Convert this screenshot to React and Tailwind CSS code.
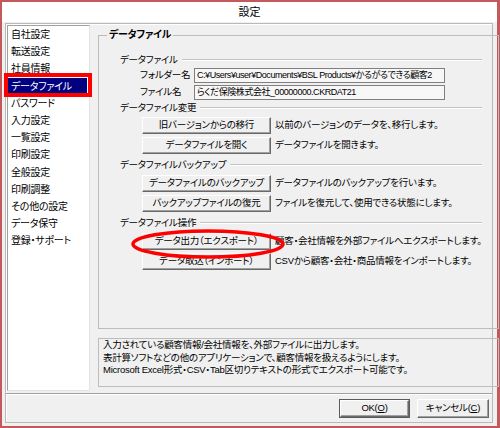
import React from "react";

const items = [
  "自社設定",
  "転送設定",
  "社員情報",
  "データファイル",
  "パスワード",
  "入力設定",
  "一覧設定",
  "印刷設定",
  "全般設定",
  "印刷調整",
  "その他の設定",
  "データ保守",
  "登録・サポート",
];

function Header({ children, className = "" }) {
  return (
    <div className={"h-[14px] flex items-center gap-[4px] " + className}>
      <span className="whitespace-nowrap">{children}</span>
      <div className="flex-1 h-[2px] border-t border-[#c3c3c3] border-b border-b-white" />
    </div>
  );
}

function Btn({ children, w = "w-[129px]", h = "h-[17px]", extra = "" }) {
  return (
    <div
      className={
        w +
        " " +
        h +
        " shrink-0 flex items-center justify-center bg-[#f0f0f0] border border-t-white border-l-white border-b-[#696969] border-r-[#696969] shadow-[inset_-1px_-1px_0_#a0a0a0] whitespace-nowrap " +
        extra
      }
    >
      {children}
    </div>
  );
}

function BtnRow({ label, desc, className = "" }) {
  return (
    <div className={"flex items-center ml-[22px] " + className}>
      <Btn>{label}</Btn>
      <span className="ml-[4px] whitespace-nowrap">{desc}</span>
    </div>
  );
}

function Field({ label, value, className = "" }) {
  return (
    <div className={"flex items-center ml-[20px] " + className}>
      <span className="w-[54px] whitespace-nowrap">{label}</span>
      <div className="w-[251px] h-[15px] border border-[#7f7f7f] bg-[#f7f7f7] pl-[2px] leading-[13px] whitespace-nowrap overflow-hidden text-[9px] tracking-[-0.45px]">
        {value}
      </div>
    </div>
  );
}

export default function App() {
  return (
    <div className="relative w-[500px] h-[428px] flex flex-col bg-[#f0f0f0] border-2 border-r-[3px] border-[#c4585b] text-[9.5px] tracking-[-0.25px] text-black font-['Liberation_Sans','Noto_Sans_CJK_JP',sans-serif] [font-feature-settings:'palt']">
      <div className="h-[20px] shrink-0 bg-white flex items-center justify-center text-[11px] tracking-normal">
        設定
      </div>
      <div className="flex-1 pl-[3px] pr-[4px] pt-[1px]">
        <div className="h-[400px] border border-[#b9b9b9] shadow-[inset_1px_1px_0_#fff] flex flex-col">
          <div className="h-[369px] flex shrink-0">
            {/* left list */}
            <div className="ml-[1px] mt-[1px] w-[83px] h-[366px] shrink-0 bg-white border border-[#a0a0a0] border-r-[#e3e3e3] border-b-[#e3e3e3] flex flex-col">
              {items.map((t, i) => (
                <div
                  key={t}
                  className={
                    "h-[17.2px] shrink-0 flex items-center pl-[3px] mr-[2px] whitespace-nowrap text-[10px] " +
                    (i === 3 ? "bg-[#000080] text-white" : "")
                  }
                >
                  {t}
                </div>
              ))}
            </div>
            {/* right area */}
            <div className="flex-1 pl-[8px] pr-[8px] flex flex-col">
              <fieldset className="mt-[4px] h-[301px] border border-[#bcbcbc]">
                <legend className="ml-[8px] px-[2px] font-bold leading-[14px] text-[10px]">
                  データファイル
                </legend>
                <div className="pl-[21px] pr-[16px] pt-[11px]">
                  <Header>データファイル</Header>
                  <Field
                    className="mt-[1px]"
                    label="フォルダー名"
                    value="C:¥Users¥user¥Documents¥BSL Products¥かるがるできる顧客2"
                  />
                  <Field
                    className="mt-[2px]"
                    label="ファイル名"
                    value="らくだ保険株式会社_00000000.CKRDAT21"
                  />
                  <Header className="mt-[1px]">データファイル変更</Header>
                  <BtnRow
                    className="mt-[2px]"
                    label="旧バージョンからの移行"
                    desc="以前のバージョンのデータを、移行します。"
                  />
                  <BtnRow
                    className="mt-[3px]"
                    label="データファイルを開く"
                    desc="データファイルを開きます。"
                  />
                  <Header className="mt-[4px]">データファイルバックアップ</Header>
                  <BtnRow
                    className="mt-[3px]"
                    label="データファイルのバックアップ"
                    desc="データファイルのバックアップを行います。"
                  />
                  <BtnRow
                    className="mt-[3px]"
                    label="バックアップファイルの復元"
                    desc="ファイルを復元して、使用できる状態にします。"
                  />
                  <Header className="mt-[4px]">データファイル操作</Header>
                  <BtnRow
                    className="mt-[3px]"
                    label="データ出力（エクスポート）"
                    desc="顧客・会社情報を外部ファイルへエクスポートします。"
                  />
                  <BtnRow
                    className="mt-[3px]"
                    label="データ取込（インポート）"
                    desc="CSVから顧客・会社・商品情報をインポートします。"
                  />
                </div>
              </fieldset>
              <div className="mt-[9px] h-[49px] border border-[#bcbcbc] px-[4px] leading-[12.5px]">
                <div>入力されている顧客情報/会社情報を、外部ファイルに出力します。</div>
                <div>表計算ソフトなどの他のアプリケーションで、顧客情報を扱えるようにします。</div>
                <div>Microsoft Excel形式・CSV・Tab区切りテキストの形式でエクスポート可能です。</div>
              </div>
            </div>
          </div>
          <div className="h-px bg-[#a0a0a0] shrink-0" />
          <div className="h-px bg-white shrink-0" />
          <div className="flex-1 flex justify-end items-start pt-[4px] pr-[3px] gap-[7px]">
            <div className="border border-[#5a5a5a]">
              <Btn w="w-[69px]" h="h-[17px]">
                <span>
                  OK(<u>O</u>)
                </span>
              </Btn>
            </div>
            <Btn w="w-[72px]" h="h-[19px]">
              <span>
                キャンセル(<u>C</u>)
              </span>
            </Btn>
          </div>
        </div>
      </div>

      {/* annotations */}
      <div className="absolute left-[2px] top-[71px] w-[88px] h-[24px] border-[4px] border-[#ff0000]" />
      <svg
        className="absolute left-[124px] top-[222px]"
        width="164"
        height="40"
        viewBox="0 0 164 40"
      >
        <ellipse cx="82" cy="20" rx="75" ry="13" fill="none" stroke="#ff0000" strokeWidth="3.5" />
      </svg>
    </div>
  );
}
